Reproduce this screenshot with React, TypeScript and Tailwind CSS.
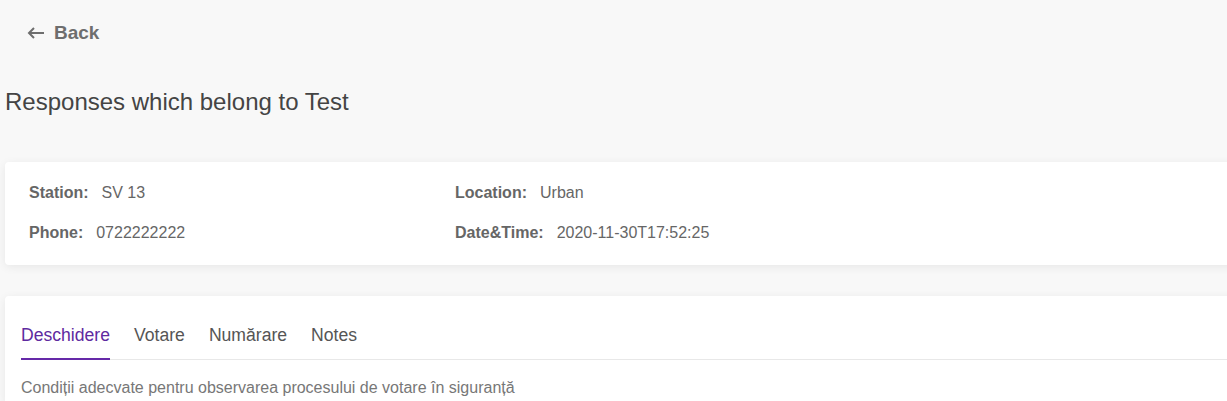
const info = [
  { label: "Station:", value: "SV 13" },
  { label: "Location:", value: "Urban" },
  { label: "Phone:", value: "0722222222" },
  { label: "Date&Time:", value: "2020-11-30T17:52:25" },
];

const tabs = ["Deschidere", "Votare", "Numărare", "Notes"];

export default function App() {
  return (
    <div className="h-[401px] w-[1227px] overflow-hidden bg-[#f8f8f8] font-['Liberation_Sans',Arial,sans-serif]">
      <div className="flex h-[64px] items-center pt-[2px] pl-[27px]">
        <button className="flex items-center gap-[9px] text-[19px] font-bold text-[#6e6e6e]">
          <svg width="18" height="12" viewBox="0 0 18 12" fill="none" stroke="currentColor" strokeWidth="2">
            <path d="M17 6H2M7 1L2 6l5 5" />
          </svg>
          Back
        </button>
      </div>

      <h1 className="mt-[20px] pl-[5px] text-[24px] leading-[36px] text-[#444]">
        Responses which belong to Test
      </h1>

      <div className="mt-[42px] ml-[5px] w-[1260px] rounded-[4px] bg-white px-6 pt-[19px] pb-[20px] shadow-[0_2px_10px_rgba(0,0,0,0.07)]">
        <div className="grid grid-cols-[426px_1fr] gap-y-4 text-[16px] leading-6 text-[#666]">
          {info.map((i) => (
            <div key={i.label} className="flex">
              <span className="font-bold text-[#666]">{i.label}</span>
              <span className="ml-[13px]">{i.value}</span>
            </div>
          ))}
        </div>
      </div>

      <div className="mt-[31px] ml-[5px] w-[1260px] rounded-t-[4px] bg-white px-4 pt-[26px] shadow-[0_2px_10px_rgba(0,0,0,0.07)]">
        <div className="flex gap-6 border-b border-[#e8e8e8]">
          {tabs.map((t, idx) => (
            <div
              key={t}
              className={
                idx === 0
                  ? "-mb-px border-b-2 border-[#6529a8] pb-[10px] text-[17.6px] leading-[26px] text-[#5e2aa0]"
                  : "-mb-px border-b-2 border-transparent pb-[10px] text-[17.6px] leading-[26px] text-[#555]"
              }
            >
              {t}
            </div>
          ))}
        </div>
        <p className="pt-[18px] pb-[5px] text-[16px] leading-5 text-[#777]">
          Condiții adecvate pentru observarea procesului de votare în siguranță
        </p>
      </div>
    </div>
  );
}
